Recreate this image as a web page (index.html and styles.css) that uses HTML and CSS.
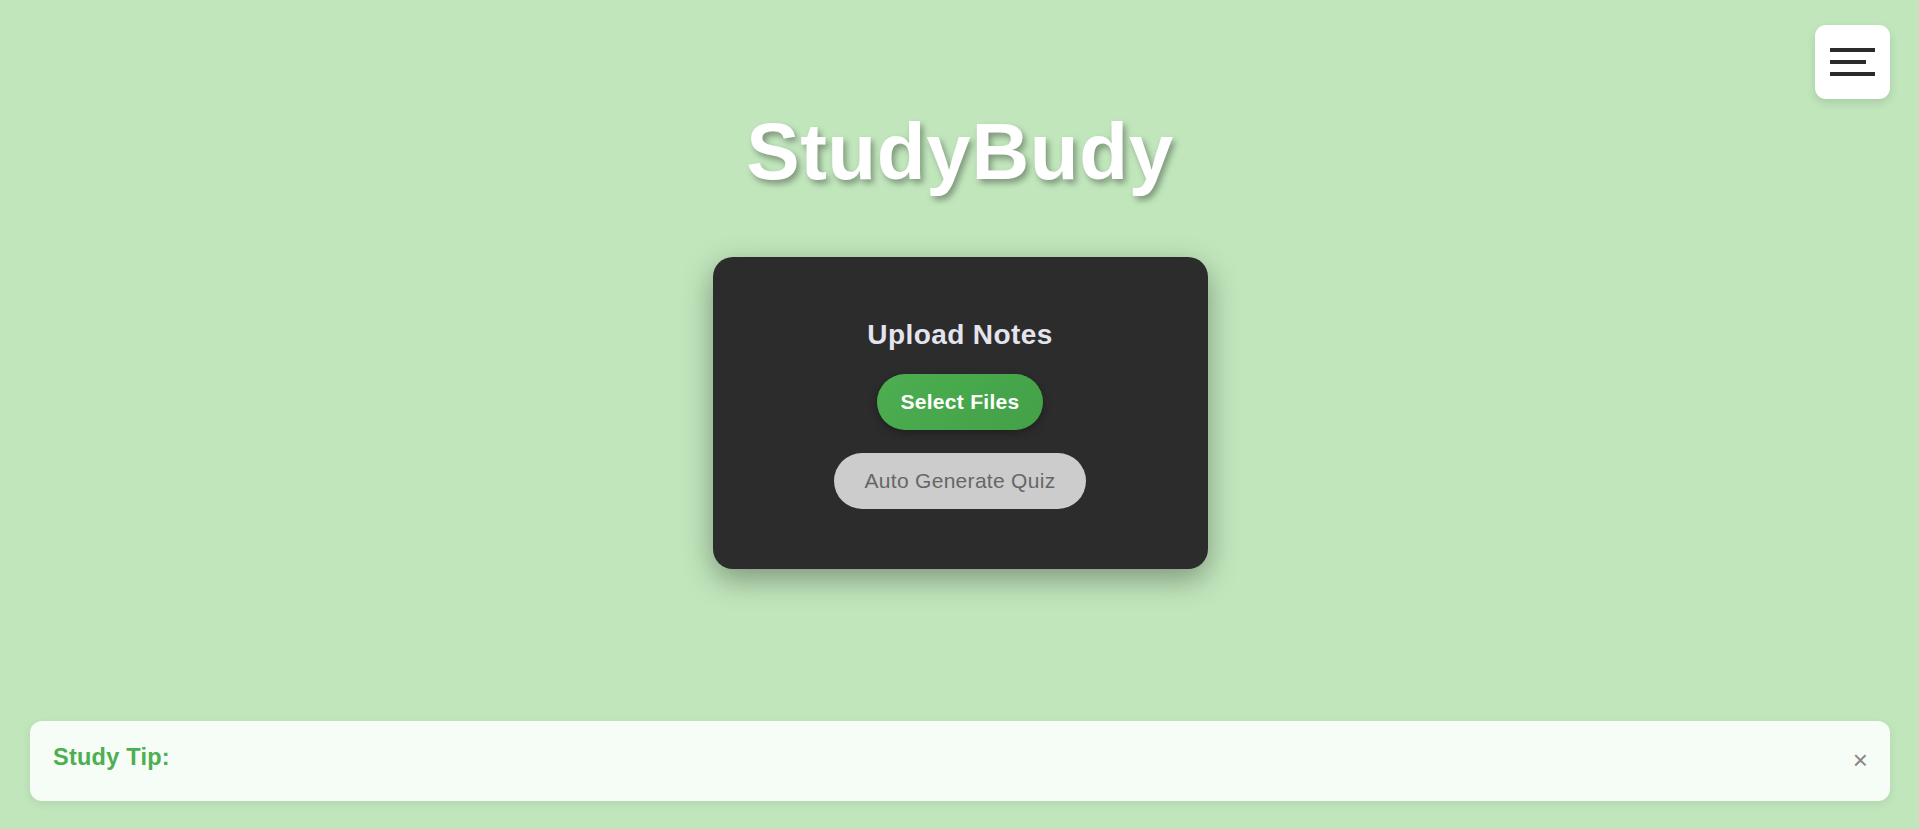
FILE: index.html
```html
<!DOCTYPE html>
<html lang="en">
<head>
<meta charset="utf-8">
<title>StudyBudy</title>
<link rel="stylesheet" href="styles.css">
</head>
<body>
<button class="menu-btn" aria-label="Menu">
  <span class="bar bar-long"></span>
  <span class="bar bar-short"></span>
  <span class="bar bar-long"></span>
</button>
<main class="app">
  <h1 class="title">StudyBudy</h1>
  <section class="card">
    <h2 class="card-title">Upload Notes</h2>
    <button class="btn btn-primary">Select Files</button>
    <button class="btn btn-secondary">Auto Generate Quiz</button>
  </section>
  <div class="tip">
    <span class="tip-label">Study Tip:</span>
    <button class="tip-close" aria-label="Close">&times;</button>
  </div>
</main>
</body>
</html>
```

FILE: styles.css
```css
* { box-sizing: border-box; }

html, body {
  margin: 0;
  padding: 0;
}

body {
  background: #c1e6bc;
  font-family: "Liberation Sans", Arial, sans-serif;
  min-height: 100vh;
}

.menu-btn {
  position: fixed;
  top: 25px;
  right: 29px;
  width: 75px;
  height: 74px;
  border: none;
  border-radius: 11px;
  background: #ffffff;
  box-shadow: 0 4px 10px rgba(0, 0, 0, 0.12);
  display: flex;
  flex-direction: column;
  align-items: flex-start;
  justify-content: center;
  gap: 8px;
  padding: 0 0 0 15px;
  cursor: pointer;
}

.bar {
  display: block;
  height: 4px;
  background: #2b2b2b;
}

.bar-long { width: 45px; }
.bar-short { width: 36px; }

.app {
  min-height: 100vh;
  display: flex;
  flex-direction: column;
  align-items: center;
  padding: 106px 29px 28px 30px;
}

.title {
  margin: 0;
  font-size: 80px;
  line-height: 92px;
  font-weight: 700;
  letter-spacing: 0.6px;
  color: #ffffff;
  text-shadow: 3px 4px 6px rgba(0, 0, 0, 0.35);
}

.card {
  margin-top: 59px;
  width: 495px;
  height: 312px;
  background: #2c2c2c;
  border-radius: 20px;
  box-shadow: 0 10px 30px rgba(0, 0, 0, 0.35);
  padding: 62px 0 60px;
  display: flex;
  flex-direction: column;
  align-items: center;
}

.card-title {
  margin: 0;
  font-size: 28px;
  line-height: 32px;
  font-weight: 700;
  letter-spacing: 0.4px;
  color: #e4e4ee;
}

.btn {
  border: none;
  border-radius: 28px;
  font-family: "Liberation Sans", Arial, sans-serif;
  font-size: 21px;
  line-height: 24px;
  letter-spacing: 0.3px;
  cursor: pointer;
}

.btn-primary {
  margin-top: 23px;
  padding: 16px 23px;
  font-weight: 700;
  color: #ffffff;
  background: linear-gradient(135deg, #4caf50, #43a047);
  box-shadow: 0 3px 8px rgba(0, 0, 0, 0.3);
}

.btn-secondary {
  margin-top: 23px;
  padding: 16px 30px;
  font-weight: 400;
  color: #666666;
  background: #cccccc;
}

.tip {
  margin-top: auto;
  align-self: stretch;
  height: 80px;
  background: #f6fcf6;
  border-radius: 12px;
  box-shadow: 0 3px 10px rgba(0, 0, 0, 0.08);
  display: flex;
  justify-content: space-between;
  align-items: flex-start;
  padding: 23px 22px 0 23px;
}

.tip-label {
  font-size: 23.5px;
  line-height: 27px;
  font-weight: 700;
  letter-spacing: 0.25px;
  color: #4caf50;
}

.tip-close {
  border: none;
  background: transparent;
  padding: 0;
  margin-top: 3px;
  font-family: "Liberation Sans", Arial, sans-serif;
  font-size: 26px;
  line-height: 26px;
  color: #888888;
  cursor: pointer;
}
```
